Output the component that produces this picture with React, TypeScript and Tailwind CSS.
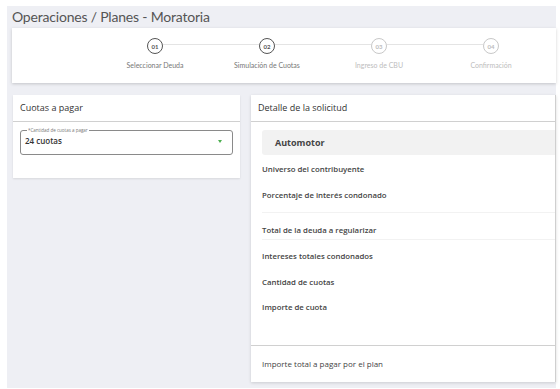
import React from 'react';

const steps = [
  { n: '01', label: 'Seleccionar Deuda', active: true },
  { n: '02', label: 'Simulación de Cuotas', active: true },
  { n: '03', label: 'Ingreso de CBU', active: false },
  { n: '04', label: 'Confirmación', active: false },
];

export default function App() {
  return (
    <div className="w-[560px] h-[389px] bg-white overflow-hidden font-['Open_Sans',sans-serif]">
      <div className="ml-[7px] mt-[6px] w-[549px] h-[382px] bg-[#eeeff4] pl-[5px] flex flex-col">
        <h1 className="shrink-0 text-[14px] leading-[21px] tracking-[-0.2px] text-[#555] font-['Lato',sans-serif]">Operaciones / Planes - Moratoria</h1>

        {/* Stepper */}
        <div className="shrink-0 mt-[1px] h-[55px] bg-white shadow-[0_1px_3px_rgba(0,0,0,0.18)] flex pl-[87px] pt-[10px] font-['Lato',sans-serif]">
          {steps.map((s, i) => (
            <div key={s.n} className="w-[112px] flex flex-col items-center">
              <div className="w-full flex items-center">
                <div className={`flex-1 h-px -mt-[3px] ${i === 0 ? 'bg-transparent' : 'bg-[#e4e4e4]'}`}></div>
                <div
                  className={`w-[16px] h-[16px] rounded-full border-[1.5px] flex items-center justify-center text-[6px] font-bold ${
                    s.active ? 'border-[#555] text-[#555]' : 'border-[#c8c8c8] text-[#bbb]'
                  }`}
                >
                  {s.n}
                </div>
                <div className={`flex-1 h-px -mt-[3px] ${i === steps.length - 1 ? 'bg-transparent' : 'bg-[#e4e4e4]'}`}></div>
              </div>
              <span className={`mt-[7px] text-[7px] leading-[8px] ${s.active ? 'text-[#777]' : 'text-[#bdbdbd]'}`}>{s.label}</span>
            </div>
          ))}
        </div>

        <div className="shrink-0 flex mt-[12px] items-start">
          {/* Cuotas a pagar */}
          <div className="ml-[1px] w-[227px] h-[83px] bg-white shadow-[0_1px_2px_rgba(0,0,0,0.1)]">
            <div className="h-[27px] flex items-center px-[7px] border-b-[1.5px] border-[#d0d0d0] text-[9px] text-[#333]">
              Cuotas a pagar
            </div>
            <fieldset className="mx-[7px] mt-[6px] h-[27px] border border-[#8a8a8a] rounded-[3px] px-[4px] flex items-center justify-between">
              <legend className="ml-[2px] px-[1px] text-[4.5px] leading-[4px] text-[#777]">*Cantidad de cuotas a pagar</legend>
              <span className="text-[8px] font-semibold text-[#333] -mt-[4px]">24 cuotas</span>
              <svg width="4" height="3" viewBox="0 0 4 3" className="mr-[6px] -mt-[4px]">
                <path d="M0 0 L4 0 L2 3 Z" fill="#4caf50" />
              </svg>
            </fieldset>
          </div>

          {/* Detalle */}
          <div className="ml-[11px] w-[305px] flex flex-col shadow-[0_1px_3px_rgba(0,0,0,0.15)] border-r border-[#cfcfcf]">
            <div className="bg-white">
              <div className="h-[27px] flex items-center px-[7px] border-b-[1.5px] border-[#d0d0d0] text-[9px] text-[#333]">
                Detalle de la solicitud
              </div>
              <div className="pl-[11px] pt-[8px] pb-[25px]">
                <div className="h-[25px] bg-[#f2f2f2] rounded-l-[3px] flex items-center pl-[13px] text-[9px] font-bold text-[#444]">
                  Automotor
                </div>
                <div className="text-[7.8px] font-semibold text-[#444]">
                  <div className="h-[27px] flex items-center mt-[1px]">Universo del contribuyente</div>
                  <div className="h-[26px] flex items-center">Porcentaje de interés condonado</div>
                  <div className="h-[1px] bg-[#f2f2f2] mt-[3px]"></div>
                  <div className="h-[26px] flex items-end pb-[2px]">Total de la deuda a regularizar</div>
                  <div className="h-[1px] bg-[#f2f2f2]"></div>
                  <div className="h-[26px] flex items-center mt-[4px]">Intereses totales condonados</div>
                  <div className="h-[25px] flex items-center">Cantidad de cuotas</div>
                  <div className="h-[25px] flex items-center">Importe de cuota</div>
                </div>
              </div>
            </div>
            <div className="h-[37px] bg-white border-t-[1.5px] border-[#d0d0d0] flex items-center pl-[11px] text-[8px] text-[#444]">
              Importe total a pagar por el plan
            </div>
          </div>
        </div>
      </div>
    </div>
  );
}
